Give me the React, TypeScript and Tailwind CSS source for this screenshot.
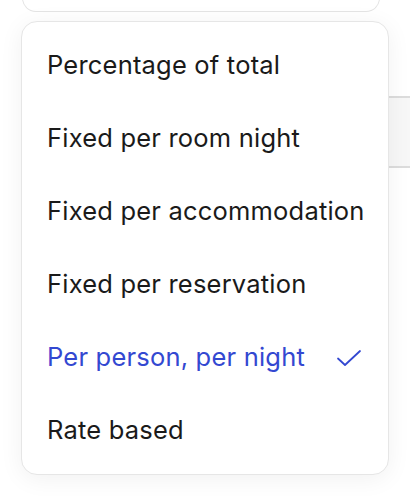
import React from "react";

const items = [
  "Percentage of total",
  "Fixed per room night",
  "Fixed per accommodation",
  "Fixed per reservation",
  "Per person, per night",
  "Rate based",
];

export default function App() {
  return (
    <div
      className="relative w-[410px] h-[496px] overflow-hidden bg-white"
      style={{ fontFamily: "Inter, 'Noto Sans', sans-serif" }}
    >
      {/* underlying page */}
      <div className="flex flex-col">
        <div className="ml-[22px] w-[356px] h-[11px] -mt-[30px] box-content pt-[30px] rounded-b-[14px] border border-t-0 border-[#e4e4e4] bg-white" />
        <div className="flex flex-col ml-[388px] mt-[84px]">
          <div className="h-[2px] bg-[#dcdcdc]" />
          <div className="h-[68px] bg-[#f7f7f7]" />
          <div className="h-[2px] bg-[#dcdcdc]" />
        </div>
      </div>
      {/* dropdown overlay */}
      <div className="absolute left-[21px] top-[21px] w-[368px] h-[454px] rounded-[16px] border border-[#e6e6e6] bg-white pt-[7px] pb-[9px] shadow-[0_4px_24px_rgba(0,0,0,0.06)]">
        {items.map((it) => {
          const sel = it === "Per person, per night";
          return (
            <div
              key={it}
              className={
                "flex items-center justify-between h-[73px] pl-[25px] pr-[26px] text-[25.5px] tracking-[0.2px] whitespace-nowrap " +
                (sel ? "text-[#3348d1]" : "text-[#1a1a1a]")
              }
            >
              <span>{it}</span>
              {sel && (
                <svg width="26" height="20" viewBox="0 0 26 20" fill="none" className="shrink-0">
                  <path
                    d="M2 10.5 L9 17 L24 3"
                    stroke="#3348d1"
                    strokeWidth="1.8"
                    strokeLinecap="round"
                    strokeLinejoin="round"
                  />
                </svg>
              )}
            </div>
          );
        })}
      </div>
    </div>
  );
}
